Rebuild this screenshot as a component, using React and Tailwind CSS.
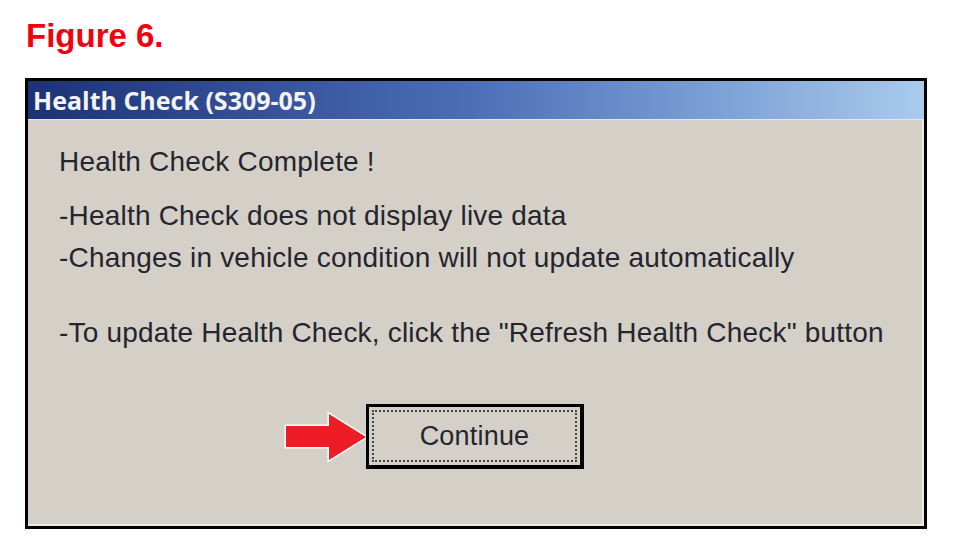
export default function App() {
  return (
    <div className="w-[954px] h-[560px] bg-white overflow-hidden font-['Liberation_Sans',Arial,sans-serif]">
      <div className="pl-[26px] pt-[16px] h-[78px]">
        <h1 className="text-[33px] leading-[40px] font-bold text-[#f2000c]">Figure 6.</h1>
      </div>

      <div className="ml-[25px] w-[902px] h-[451px] border-[3px] border-black bg-[#d4d0c8] flex flex-col">
        {/* title bar */}
        <div className="h-[39px] shrink-0 flex items-center pl-[5px] bg-gradient-to-r from-[#1c3277] via-[#4d6fb8] to-[#a9cbee] border-b border-[#e8e6e0]">
          <span className="font-['Open_Sans',sans-serif] font-bold text-[25px] leading-none text-[#f4f4f8]">
            Health Check (S309-05)
          </span>
        </div>

        {/* body */}
        <div className="flex-1 flex flex-col pl-[31px] pt-[26px] text-[28px] leading-[32px] tracking-[0.2px] text-[#25252e] border-r-2 border-b-2 border-[#ecebe4]">
          <p>Health Check Complete !</p>
          <p className="mt-[22px]">-Health Check does not display live data</p>
          <p className="mt-[10px]">-Changes in vehicle condition will not update automatically</p>
          <p className="mt-[43px]">-To update Health Check, click the "Refresh Health Check" button</p>

          <div className="flex items-center mt-[55px] ml-[225px]">
            <svg width="84" height="52" viewBox="0 0 84 52" className="-mr-[2px]">
              <polygon
                points="2,15 45,15 45,3 82,26 45,49 45,36 2,36"
                fill="#ee1c25"
                stroke="#ffffff"
                strokeWidth="3"
                strokeLinejoin="miter"
                paintOrder="stroke"
              />
            </svg>
            <button className="w-[218px] h-[65px] border-[3px] border-black border-r-[4px] border-b-[4px] bg-[#d4d0c8] p-[3px]">
              <div className="w-full h-full border-2 border-dotted border-[#444] flex items-center justify-center text-[27px] tracking-[0.2px] text-[#25252e]">
                Continue
              </div>
            </button>
          </div>
        </div>
      </div>
    </div>
  );
}
